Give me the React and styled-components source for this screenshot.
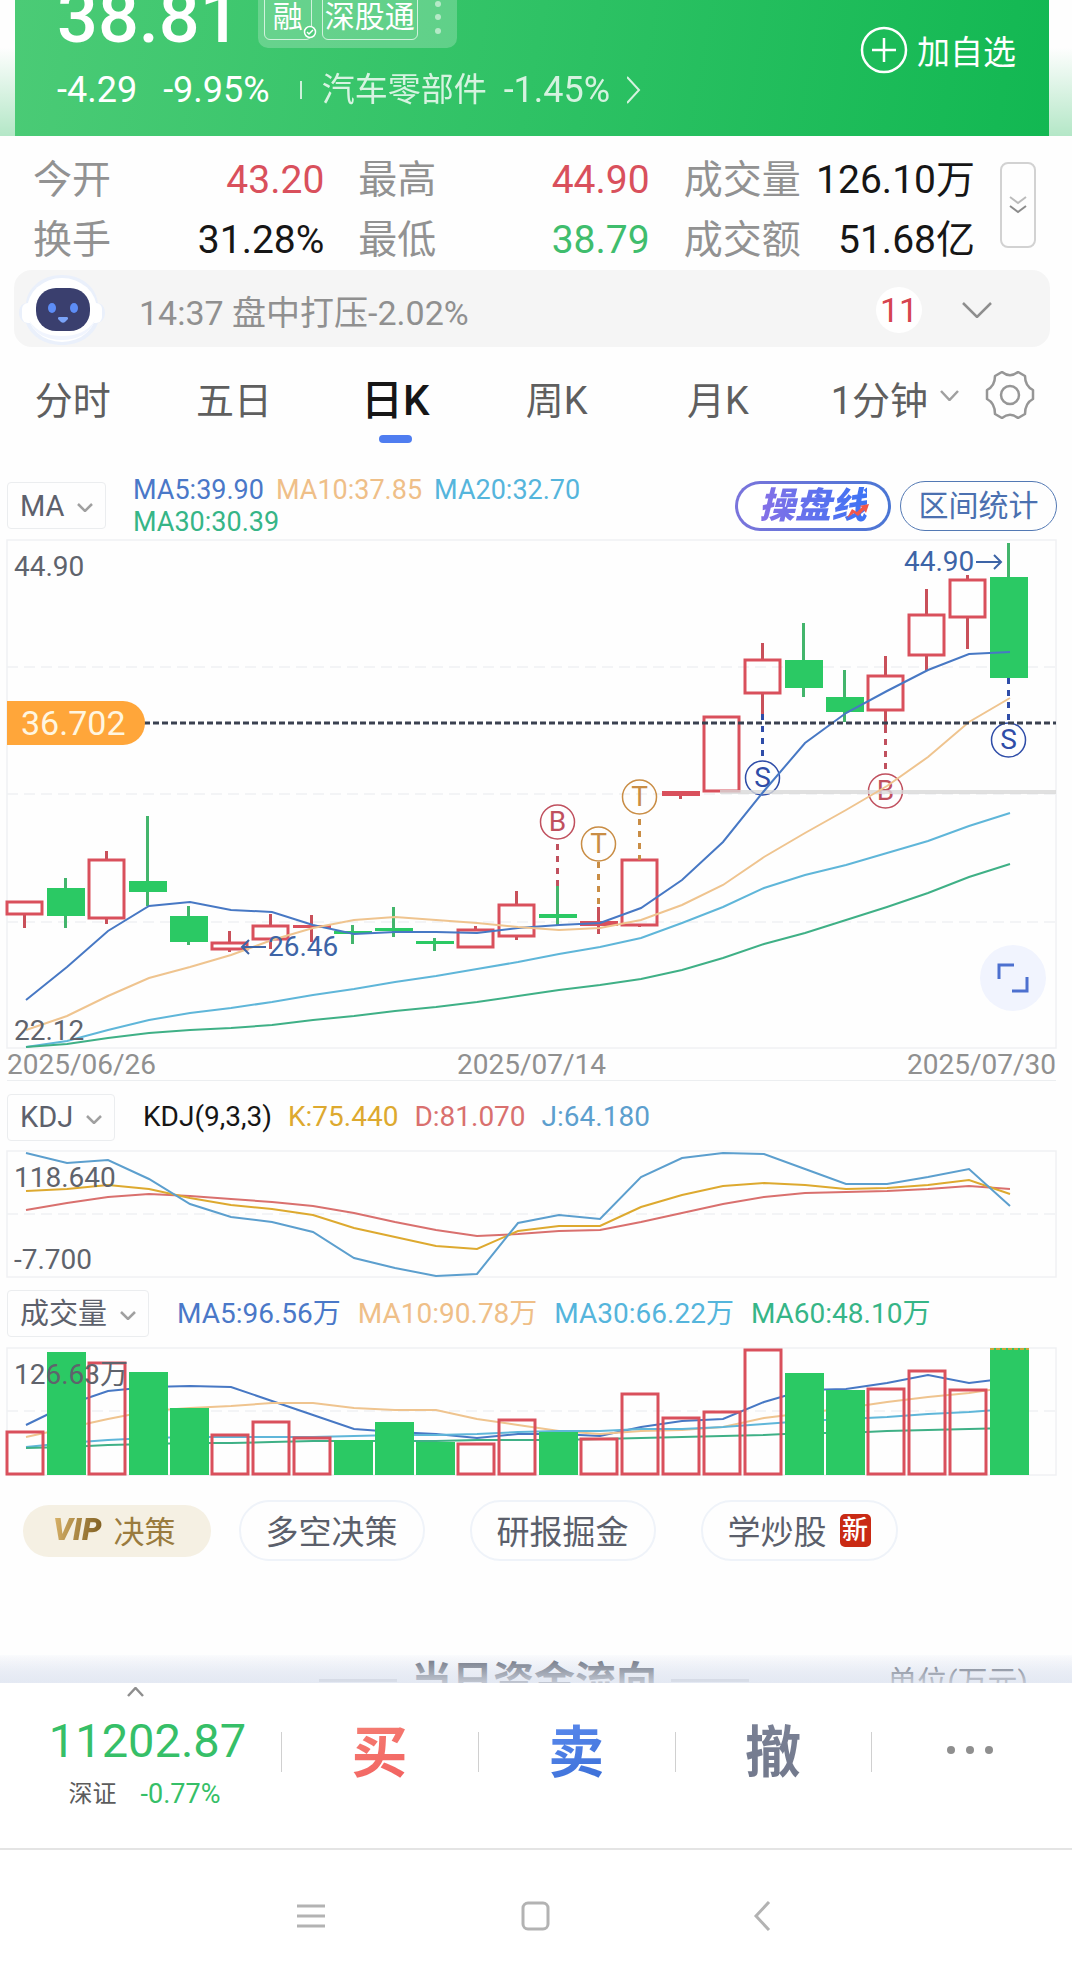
import React from 'react'
import styled, { createGlobalStyle } from 'styled-components'

const RED = '#d9505c'
const GREEN = '#2bc964'
const STEP = 41
const CHART_WIDTH = 1049

const GlobalStyle = createGlobalStyle`
* { box-sizing: border-box; }
body {
  margin: 0;
  background: #fefefe;
  font-family: Roboto, "Noto Sans CJK SC", sans-serif;
}
button, select {
  font-family: inherit;
  color: inherit;
  background: none;
  border: 0;
  padding: 0;
  margin: 0;
  cursor: pointer;
}
a { color: inherit; text-decoration: none; }
svg { display: block; flex: none; }
`

/* ---------- header ---------- */

const HeaderWrap = styled.header`
  padding: 0 23px 0 15px;
  background:
    linear-gradient(#fefefe 35%, rgba(254, 254, 254, 0)),
    #b4e7c7;
`

const Header = styled.div`
  display: flex;
  justify-content: space-between;
  height: 136px;
  padding: 0 33px 0 42px;
  color: #fff;
  background: linear-gradient(100deg, #4bcb76, #2fc265 50%, #12b852);
  overflow: hidden;
`

const PriceRow = styled.div`
  display: flex;
  align-items: flex-end;
  gap: 17px;
  height: 48px;
`

const Price = styled.strong`
  font-size: 72px;
  line-height: 60px;
  font-weight: 500;
`

const Tags = styled.div`
  display: flex;
  align-items: center;
  gap: 10px;
  height: 64px;
  padding: 8px 15px 8px 6px;
  border-radius: 10px;
  background: rgba(255, 255, 255, 0.22);
`

const Tag = styled.span`
  display: flex;
  align-items: flex-end;
  position: relative;
  height: 48px;
  padding: 0 ${props => (props.$wide ? '2px' : '8px')};
  border: 1px solid rgba(255, 255, 255, 0.7);
  border-radius: 6px;
  font-size: 30px;
  line-height: 44px;
`

const Check = styled.svg`
  position: absolute;
  right: -6px;
  bottom: 0;
`

const ChangeRow = styled.div`
  display: flex;
  align-items: center;
  padding-top: 22px;
  font-size: 36px;
  line-height: 40px;
`

const Change = styled.span`
  margin-right: 26px;
`

const Sector = styled.a`
  display: flex;
  align-items: center;
  gap: 17px;
  padding-left: 20px;
  opacity: 0.8;
`

const SectorName = styled.span`
  font-size: 33px;
`

const Bar = styled.i`
  width: 2px;
  height: 18px;
  margin-left: 4px;
  background: rgba(255, 255, 255, 0.75);
`

const AddButton = styled.button`
  display: flex;
  align-items: center;
  align-self: flex-start;
  gap: 9px;
  height: 54px;
  margin-top: 23px;
  font-size: 33px;
`

/* ---------- quote figures ---------- */

const Stats = styled.section`
  display: flex;
  gap: 25px;
  padding: 14px 36px 0 33px;
`

const StatGrid = styled.dl`
  flex: 1;
  display: grid;
  grid-template-columns: repeat(3, 1fr);
  column-gap: 34px;
  margin: 0;
  font-size: 39px;
  line-height: 60px;
`

const Stat = styled.div`
  display: flex;
  justify-content: space-between;
  white-space: nowrap;
`

const StatName = styled.dt`
  color: #929292;
`

const StatValue = styled.dd`
  margin: 0;
  color: ${props => props.$color || '#161616'};
`

const MoreButton = styled.button`
  display: flex;
  align-items: center;
  justify-content: center;
  width: 36px;
  height: 86px;
  margin-top: 12px;
  border: 2px solid #d2d2d2;
  border-radius: 8px;
`

/* ---------- alert ---------- */

const Alert = styled.section`
  display: flex;
  align-items: center;
  height: 77px;
  margin: 0 22px 0 14px;
  padding: 3px 58px 0 4px;
  border-radius: 18px;
  background: #f5f5f5;
  color: #909090;
  font-size: 34px;
`

const AlertText = styled.p`
  flex: 1;
  margin: 0 0 0 33px;
`

const Count = styled.span`
  display: flex;
  align-items: center;
  justify-content: center;
  width: 46px;
  height: 46px;
  margin-right: 40px;
  border-radius: 50%;
  background: #fff;
  color: #d64550;
`

/* ---------- period tabs ---------- */

const Tabs = styled.nav`
  display: flex;
  align-items: flex-start;
  height: 127px;
  margin-left: -8px;
  padding: 29px 37px 0 0;
`

const Tab = styled.button`
  flex: 1;
  display: flex;
  flex-direction: column;
  align-items: center;
  gap: 9px;
  color: ${props => (props.$active ? '#161616' : '#5f5f5f')};
  font-size: ${props => (props.$active ? '42px' : '38px')};
  font-weight: ${props => (props.$active ? 500 : 400)};
  line-height: 50px;
  white-space: nowrap;
  &::after {
    content: '';
    width: 33px;
    height: 8px;
    border-radius: 4px;
    background: ${props => (props.$active ? '#4f7df0' : 'transparent')};
  }
`

const PeriodChevron = styled.span`
  padding-top: 14px;
  margin-left: -20px;
`

const GearButton = styled.button`
  margin: -5px 0 0 26px;
`

/* ---------- indicator bars ---------- */

const IndicatorBar = styled.div`
  display: flex;
  align-items: center;
  gap: ${props => props.$gap || '28px'};
  height: ${props => props.$height};
  padding: ${props => props.$pad || '2px 16px 0 7px'};
`

const Picker = styled.label`
  position: relative;
  flex: none;
  display: flex;
  align-items: center;
  border: 1px solid #ebedef;
  border-radius: 4px;
  color: #5d616c;
  svg {
    position: absolute;
    right: 12px;
    top: 20px;
    pointer-events: none;
  }
`

const PickerSelect = styled.select`
  appearance: none;
  height: 45px;
  padding: 0 40px 0 12px;
  font-size: 29px;
  outline: none;
`

const Legend = styled.div`
  flex: 1;
  display: flex;
  flex-wrap: wrap;
  column-gap: ${props => props.$gap || '16px'};
  font-size: ${props => props.$size || '28px'};
  line-height: 32px;
`

const LegendItem = styled.span`
  color: ${props => props.$color};
  white-space: nowrap;
`

const BarButtons = styled.div`
  display: flex;
  gap: 9px;
`

const TradeLineButton = styled.button`
  position: relative;
  width: 156px;
  height: 50px;
  border: 3px solid transparent;
  border-radius: 25px;
  background:
    linear-gradient(#fff, #fff) padding-box,
    linear-gradient(90deg, #7a74dc, #4a76d4) border-box;
  span {
    font-size: 36px;
    line-height: 44px;
    font-weight: 900;
    font-style: italic;
    color: transparent;
    background: linear-gradient(90deg, #8670e6, #3c73f5);
    background-clip: text;
  }
  svg {
    position: absolute;
    right: 18px;
    bottom: 9px;
  }
`

const RangeButton = styled.button`
  width: 157px;
  height: 50px;
  border: 1px solid #5379b4;
  border-radius: 25px;
  color: #4b70b0;
  font-size: 30px;
  line-height: 44px;
`

/* ---------- charts ---------- */

const ChartBox = styled.div`
  position: relative;
  margin: 0 16px 0 7px;
`

const Plot = styled.svg`
  width: 100%;
  height: auto;
  overflow: visible;
  font-size: 28px;
`

const FullButton = styled.button`
  position: absolute;
  right: 10px;
  bottom: 37px;
  display: flex;
  align-items: center;
  justify-content: center;
  width: 66px;
  height: 66px;
  border-radius: 50%;
  background: #f1f4fe;
`

const Dates = styled.div`
  display: flex;
  justify-content: space-between;
  height: 33px;
  margin: 0 16px 0 7px;
  border-bottom: 1px solid #eceef0;
  color: #909090;
  font-size: 28px;
  line-height: 34px;
`

/* ---------- shortcuts ---------- */

const Shortcuts = styled.div`
  display: flex;
  align-items: center;
  gap: 45px;
  margin-top: 25px;
  padding-left: 23px;
`

const Shortcut = styled.a`
  display: flex;
  align-items: center;
  gap: 13px;
  height: 61px;
  padding: 0 25px 2px;
  border: 2px solid #eff3f9;
  border-radius: 31px;
  color: #5b5f6b;
  font-size: 33px;
  white-space: nowrap;
`

const VipShortcut = styled(Shortcut)`
  gap: 12px;
  height: 52px;
  margin-right: -17px;
  padding: 0 35px 2px 30px;
  border: 0;
  background: #f5f0e3;
  color: #9a7b3e;
  font-size: 31px;
  b {
    font-style: italic;
    font-weight: 900;
    color: transparent;
    background: linear-gradient(100deg, #dcb66c, #7a5a1e);
    background-clip: text;
  }
`

const NewMark = styled.em`
  width: 31px;
  margin-top: 2px;
  border-radius: 5px;
  background: #c92a14;
  color: #fff;
  font-size: 26px;
  font-style: normal;
  font-weight: 500;
  line-height: 33px;
  text-align: center;
`

/* ---------- next section, cut off by the footer ---------- */

const Peek = styled.section`
  position: relative;
  display: grid;
  grid-template-columns: 1fr auto 1fr;
  height: 28px;
  margin-top: 94px;
  padding-right: 4px;
  overflow: hidden;
  background: linear-gradient(#fdfdfe, #e4e9f3);
  color: #5b6270;
  white-space: nowrap;
  &::after {
    content: '';
    position: absolute;
    inset: 0;
    background: linear-gradient(rgba(228, 233, 243, 0.1), rgba(228, 233, 243, 0.75));
  }
`

const PeekTitle = styled.h2`
  grid-column: 2;
  display: flex;
  align-items: flex-start;
  gap: 14px;
  margin: 0;
  font-size: 41px;
  line-height: 54px;
  font-weight: 700;
  &::before, &::after {
    content: '';
    width: 78px;
    height: 3px;
    margin-top: 24px;
    background: #b9bfcc;
  }
`

const PeekUnit = styled.span`
  justify-self: end;
  padding-right: 40px;
  font-size: 30px;
  line-height: 54px;
`

/* ---------- footer ---------- */

const Footer = styled.footer`
  display: flex;
  height: 165px;
  padding-right: 4px;
  background: #fff;
`

const Index = styled.a`
  display: flex;
  flex-direction: column;
  align-items: center;
  width: 281px;
  padding: 4px 0 0 14px;
  color: #36bf68;
  svg { margin-right: 24px; }
`

const IndexValue = styled.strong`
  margin-top: 17px;
  font-size: 47px;
  font-weight: 400;
  line-height: 54px;
`

const IndexChange = styled.span`
  display: flex;
  gap: 24px;
  margin: 8px 6px 0 0;
  font-size: 27px;
  line-height: 36px;
  i {
    color: #5c5c5c;
    font-style: normal;
    font-size: 24px;
  }
`

const Action = styled.button`
  flex: 1;
  position: relative;
  display: flex;
  justify-content: center;
  padding-top: 30px;
  font-size: 56px;
  font-weight: 700;
  line-height: 80px;
  &::before {
    content: '';
    position: absolute;
    left: 0;
    top: 49px;
    width: 1px;
    height: 40px;
    background: #d0d0d0;
  }
  span {
    color: transparent;
    background: ${props => props.$fill};
    background-clip: text;
  }
  svg { margin-top: 32px; }
`

const SystemBar = styled.nav`
  display: flex;
  justify-content: center;
  align-items: center;
  gap: 191px;
  height: 130px;
  padding-top: 4px;
  border-top: 2px solid #e4e4e4;
  background: #fff;
`

/* ---------- data ---------- */

// [up, body top, body bottom, high, low]
const candles = [
  [1, 361, 375, 361, 388],
  [0, 348, 376, 338, 388],
  [1, 319, 379, 311, 384],
  [0, 341, 352, 276, 366],
  [0, 376, 402, 366, 405],
  [1, 402, 410, 391, 412],
  [1, 385, 400, 374, 409],
  [1, 385, 388, 375, 402],
  [0, 391, 394, 385, 404],
  [0, 388, 391, 367, 397],
  [0, 401, 404, 398, 411],
  [1, 389, 408, 386, 408],
  [1, 364, 397, 351, 400],
  [0, 374, 378, 346, 385],
  [1, 381, 386, 367, 394],
  [1, 319, 386, 319, 387],
  [1, 251, 256, 251, 259],
  [1, 176, 252, 176, 252],
  [1, 119, 154, 103, 174],
  [0, 120, 148, 83, 157],
  [0, 157, 172, 130, 182],
  [1, 135, 171, 116, 187],
  [1, 74, 116, 49, 131],
  [1, 39, 78, 35, 109],
  [0, 37, 138, 3, 138]
]

const priceLines = [
  ['#4778c4', [460, 427, 391, 366, 362, 370, 372, 385, 394, 392, 392, 393, 388, 385, 383, 368, 340, 302, 251, 203, 173, 151, 130, 114, 112]],
  ['#efc48f', [490, 476, 456, 438, 427, 415, 400, 388, 380, 377, 380, 383, 387, 390, 388, 380, 365, 345, 317, 293, 270, 246, 217, 182, 158]],
  ['#5fb6d9', [507, 501, 490, 480, 473, 468, 462, 455, 449, 442, 436, 429, 422, 414, 407, 398, 383, 367, 348, 335, 325, 313, 301, 286, 273]],
  ['#3fb086', [507, 504, 498, 493, 490, 488, 485, 480, 476, 471, 467, 462, 456, 450, 445, 439, 430, 418, 404, 393, 380, 367, 353, 337, 324]]
]

// [letter, candle index, circle centre, line from, line to, colour]
const signals = [
  ['B', 13, 282, 304, 346, '#c0505e'],
  ['T', 14, 304, 322, 367, '#c98d45'],
  ['T', 15, 257, 279, 320, '#c98d45'],
  ['S', 18, 238, 174, 220, '#2f4da8'],
  ['B', 21, 251, 187, 230, '#c0505e'],
  ['S', 24, 200, 138, 182, '#2f4da8']
]

const kdjLines = [
  ['#d9706e', [59, 52, 46, 43, 45, 48, 51, 55, 62, 71, 79, 85, 83, 80, 79, 71, 62, 53, 46, 42, 41, 40, 38, 35, 38]],
  ['#dda92f', [40, 38, 34, 38, 47, 54, 58, 64, 77, 86, 95, 98, 80, 75, 75, 56, 44, 35, 32, 34, 38, 37, 34, 29, 43]],
  ['#5c9fce', [2, 12, 9, 28, 53, 66, 71, 81, 107, 117, 125, 123, 72, 64, 68, 26, 7, 2, 3, 18, 33, 33, 26, 18, 55]]
]

// [up, bar top]
const volumes = [
  [1, 83], [0, 4], [1, 14], [0, 24], [0, 60], [1, 86], [1, 73], [1, 89], [0, 92],
  [0, 74], [0, 94], [1, 95], [1, 71], [0, 84], [1, 90], [1, 45], [1, 69], [1, 63],
  [1, 1], [0, 25], [0, 42], [1, 40], [1, 22], [1, 41], [0, 0]
]

const volumeLines = [
  ['#4778c4', [77, 57, 43, 39, 38, 39, 53, 67, 81, 84, 86, 90, 86, 86, 88, 79, 73, 71, 54, 42, 41, 35, 27, 35, 30]],
  ['#efc48f', [89, 80, 71, 63, 60, 58, 55, 55, 60, 62, 62, 71, 77, 83, 86, 83, 82, 79, 70, 65, 60, 54, 49, 45, 39]],
  ['#5fb6d9', [99, 95, 92, 90, 89, 89, 89, 89, 88, 87, 87, 86, 84, 83, 83, 81, 81, 79, 76, 73, 71, 69, 66, 64, 61]],
  ['#3fb086', [100, 99, 97, 96, 95, 95, 94, 93, 93, 93, 93, 92, 92, 92, 91, 90, 89, 88, 87, 85, 85, 83, 82, 81, 80]]
]

const stats = [
  ['今开', '43.20', '#d9505c'],
  ['最高', '44.90', '#d9505c'],
  ['成交量', '126.10万'],
  ['换手', '31.28%'],
  ['最低', '38.79', '#3fbd6d'],
  ['成交额', '51.68亿']
]

/* ---------- pieces ---------- */

function Chevron({ width = 16, height = 9, color = '#a0a0a0', up }) {
  const d = up
    ? `M1 ${height - 1} L${width / 2} 1 L${width - 1} ${height - 1}`
    : `M1 1 L${width / 2} ${height - 1} L${width - 1} 1`
  return (
    <svg width={width} height={height} fill="none" stroke={color} strokeWidth="2.5">
      <path d={d} />
    </svg>
  )
}

function Robot() {
  return (
    <svg width="88" height="72" viewBox="0 0 88 72">
      <path d="M44 1c21 0 34 13 36 28 5 1 7 5 7 10s-3 9-7 10c-5 13-18 22-36 22S13 62 8 49c-4-1-7-5-7-10s2-9 7-10C10 14 23 1 44 1z" fill="#eaf0fb" />
      <rect x="4" y="29" width="14" height="20" rx="6" fill="#fff" />
      <rect x="70" y="29" width="14" height="20" rx="6" fill="#fff" />
      <ellipse cx="44" cy="36" rx="35" ry="32" fill="#fff" />
      <path d="M11 46c5 14 18 20 33 20s28-6 33-20c-7 12-19 16-33 16s-26-4-33-16z" fill="#f1f5fe" />
      <rect x="18" y="14" width="54" height="43" rx="20" fill="#3a3f6e" />
      <ellipse cx="34" cy="34" rx="4" ry="5" fill="#5d8df6" />
      <ellipse cx="56" cy="34" rx="4" ry="5" fill="#5d8df6" />
      <path d="M41 43h8c1 0 1 1 1 2l-3 3c-1 1-3 1-4 0l-3-3c0-1 0-2 1-2z" fill="#7aa3f8" />
    </svg>
  )
}

function Gear() {
  return (
    <svg width="50" height="48" viewBox="0 0 50 48" fill="none" stroke="#969696" strokeWidth="2.5" strokeLinejoin="round">
      <path d="M17 1c5 4 11 4 16 0l7 4c0 7 2 11 8 14v9c-6 3-8 8-8 15l-7 4c-5-4-11-4-16 0l-7-4c0-7-2-12-8-15v-9c6-3 8-7 8-14z" />
      <circle cx="25" cy="24" r="9" />
    </svg>
  )
}

function IndicatorPicker({ name, label }) {
  return (
    <Picker>
      <PickerSelect aria-label={label} defaultValue={name}>
        <option value={name}>{name}</option>
      </PickerSelect>
      <Chevron />
    </Picker>
  )
}

function Frame({ height, grid }) {
  return (
    <g fill="none" stroke="#f0f1f3" strokeWidth="1.5">
      <rect x="0" y="0" width={CHART_WIDTH} height={height} />
      {grid.map(y => (
        <line key={y} x1="0" x2={CHART_WIDTH} y1={y} y2={y} strokeDasharray="11 6" />
      ))}
    </g>
  )
}

function Lines({ series }) {
  return series.map(([color, values]) => (
    <polyline
      key={color}
      fill="none"
      stroke={color}
      strokeWidth="2"
      points={values.map((y, i) => `${19 + i * STEP},${y}`).join(' ')}
    />
  ))
}

function Candle({ index, data }) {
  const [up, top, bottom, high, low] = data
  const x = 17.5 + index * STEP
  const color = up ? RED : GREEN
  const hollow = up && bottom - top > 6
  return (
    <g>
      <path d={`M${x} ${high}V${top}M${x} ${bottom}V${low}`} stroke={up ? '#c9505a' : '#43b56c'} strokeWidth="3" />
      {hollow
        ? <rect x={x - 17.5} y={top + 1} width="35" height={bottom - top - 2} fill="none" stroke={color} strokeWidth="3" />
        : <rect x={x - 18.5} y={top} width="38" height={bottom - top} fill={color} />}
    </g>
  )
}

function Signal({ letter, index, cy, from, to, color }) {
  const x = 17.5 + index * STEP
  return (
    <g>
      <line x1={x} x2={x} y1={from} y2={to} stroke={color} strokeWidth="3" strokeDasharray="6 6" />
      <circle cx={x} cy={cy} r="17" fill="none" stroke={color} strokeWidth="1.5" />
      <text x={x} y={cy + 9} textAnchor="middle" fill={color}>{letter}</text>
    </g>
  )
}

function PriceChart() {
  return (
    <ChartBox>
      <Plot viewBox={`0 0 ${CHART_WIDTH} 508`}>
        <Frame height={508} grid={[127, 254, 382]} />
        {candles.map((data, i) => <Candle key={i} index={i} data={data} />)}
        {signals.map(([letter, index, cy, from, to, color]) => (
          <Signal key={index} letter={letter} index={index} cy={cy} from={from} to={to} color={color} />
        ))}
        <line x1="713" x2={CHART_WIDTH} y1="252" y2="252" stroke="#d8d8d8" strokeOpacity="0.8" strokeWidth="4" />
        <Lines series={priceLines} />
        <line x1="137" x2={CHART_WIDTH} y1="183" y2="183" stroke="#3a4150" strokeWidth="3" strokeDasharray="6 3" />
        <path d="M0 161h116a22 22 0 0 1 0 44h-116z" fill="#ffa63a" />
        <text x="14" y="195" fill="#fff6e0" fontSize="34">36.702</text>
        <g fill="#5f636c">
          <text x="7" y="36">44.90</text>
          <text x="7" y="500">22.12</text>
        </g>
        <g fill="#3d64a6">
          <text x="897" y="31">44.90</text>
          <text x="261" y="416">26.46</text>
        </g>
        <g fill="none" stroke="#3d64a6" strokeWidth="2">
          <path d="M969 22h25M987 15l7 7l-7 7" />
          <path d="M259 407h-24M242 400l-7 7l7 7" />
        </g>
      </Plot>
      <FullButton aria-label="全屏">
        <svg width="32" height="30" fill="none" stroke="#4d70cf" strokeWidth="3">
          <path d="M2 16V2H17M30 14V28H15" />
        </svg>
      </FullButton>
    </ChartBox>
  )
}

function KdjChart() {
  return (
    <ChartBox>
      <Plot viewBox={`0 0 ${CHART_WIDTH} 126`}>
        <Frame height={126} grid={[63]} />
        <Lines series={kdjLines} />
        <g fill="#5f636c">
          <text x="7" y="36">118.640</text>
          <text x="7" y="118">-7.700</text>
        </g>
      </Plot>
    </ChartBox>
  )
}

function VolumeChart() {
  return (
    <ChartBox>
      <Plot viewBox={`0 0 ${CHART_WIDTH} 127`}>
        <Frame height={127} grid={[63]} />
        <Lines series={volumeLines} />
        {volumes.map(([up, top], i) => up
          ? <rect key={i} x={i * STEP} y={top + 1} width="36" height={125 - top} fill="none" stroke={RED} strokeWidth="3" />
          : <rect key={i} x={i * STEP - 1} y={top} width="39" height={127 - top} fill={GREEN} />
        )}
        <line x1="983" x2="1022" y1="1" y2="1" stroke="#c8a83a" strokeWidth="2" strokeDasharray="4 2" />
        <text x="7" y="36" fill="#5f636c">126.63万</text>
      </Plot>
    </ChartBox>
  )
}

function QuoteHeader() {
  return (
    <HeaderWrap>
      <Header>
        <div>
          <PriceRow>
            <Price>38.81</Price>
            <Tags>
              <Tag>
                融
                <Check width="14" height="14" viewBox="0 0 14 14" fill="#4fcb7b" stroke="#fff" strokeWidth="1.5">
                  <circle cx="7" cy="7" r="5.5" />
                  <path d="M4 7l2 2l4-4" />
                </Check>
              </Tag>
              <Tag $wide>深股通</Tag>
              <svg width="14" height="48" fill="#b5e9c7">
                <circle cx="10" cy="12" r="3" />
                <circle cx="10" cy="25" r="3" />
                <circle cx="10" cy="39" r="3" />
              </svg>
            </Tags>
          </PriceRow>
          <ChangeRow>
            <Change>-4.29</Change>
            <Change>-9.95%</Change>
            <Bar />
            <Sector href="#sector">
              <SectorName>汽车零部件</SectorName>
              <span>-1.45%</span>
              <svg width="16" height="28" fill="none" stroke="#fff" strokeWidth="2">
                <path d="M0 1L12 14L0 27" />
              </svg>
            </Sector>
          </ChangeRow>
        </div>
        <AddButton>
          <svg width="48" height="48" fill="none" stroke="#fff" strokeWidth="2.5">
            <circle cx="24" cy="24" r="22" />
            <path d="M12 24H36M24 12V36" />
          </svg>
          加自选
        </AddButton>
      </Header>
    </HeaderWrap>
  )
}

function App() {
  return (
    <>
      <GlobalStyle />
      <QuoteHeader />

      <Stats>
        <StatGrid>
          {stats.map(([name, value, color]) => (
            <Stat key={name}>
              <StatName>{name}</StatName>
              <StatValue $color={color}>{value}</StatValue>
            </Stat>
          ))}
        </StatGrid>
        <MoreButton aria-label="展开">
          <svg width="18" height="18" fill="none" strokeWidth="2">
            <path d="M1 1L9 7L17 1" stroke="#bbb" />
            <path d="M1 10L9 16L17 10" stroke="#8c8c8c" />
          </svg>
        </MoreButton>
      </Stats>

      <Alert>
        <Robot />
        <AlertText>14:37 盘中打压-2.02%</AlertText>
        <Count>11</Count>
        <Chevron width={30} height={16} color="#8e8e8e" />
      </Alert>

      <Tabs>
        <Tab>分时</Tab>
        <Tab>五日</Tab>
        <Tab $active>日K</Tab>
        <Tab>周K</Tab>
        <Tab>月K</Tab>
        <Tab>1分钟</Tab>
        <PeriodChevron><Chevron width={19} height={11} /></PeriodChevron>
        <GearButton aria-label="设置"><Gear /></GearButton>
      </Tabs>

      <IndicatorBar $height="66px" $gap="27px" $pad="0 15px 3px 7px">
        <IndicatorPicker name="MA" label="主图指标" />
        <Legend $size="27px" $gap="12px">
          <LegendItem $color="#4a78c8">MA5:39.90</LegendItem>
          <LegendItem $color="#efbf88">MA10:37.85</LegendItem>
          <LegendItem $color="#55b5dc">MA20:32.70</LegendItem>
          <LegendItem $color="#36b587">MA30:30.39</LegendItem>
        </Legend>
        <BarButtons>
          <TradeLineButton>
            <span>操盘线</span>
            <svg width="24" height="16" viewBox="0 0 24 16" fill="#f2574a">
              <path d="M1 15L6 6L11 9L16 4L13 3L23 1L20 10L18 7L12 13L8 10z" />
            </svg>
          </TradeLineButton>
          <RangeButton>区间统计</RangeButton>
        </BarButtons>
      </IndicatorBar>
      <PriceChart />
      <Dates>
        <span>2025/06/26</span>
        <span>2025/07/14</span>
        <span>2025/07/30</span>
      </Dates>

      <IndicatorBar $height="70px">
        <IndicatorPicker name="KDJ" label="副图指标一" />
        <Legend>
          <LegendItem $color="#161616">KDJ(9,3,3)</LegendItem>
          <LegendItem $color="#dda92f">K:75.440</LegendItem>
          <LegendItem $color="#d9706e">D:81.070</LegendItem>
          <LegendItem $color="#5c9fce">J:64.180</LegendItem>
        </Legend>
      </IndicatorBar>
      <KdjChart />

      <IndicatorBar $height="71px">
        <IndicatorPicker name="成交量" label="副图指标二" />
        <Legend $gap="17px">
          <LegendItem $color="#4a78c8">MA5:96.56万</LegendItem>
          <LegendItem $color="#efbf88">MA10:90.78万</LegendItem>
          <LegendItem $color="#55b5dc">MA30:66.22万</LegendItem>
          <LegendItem $color="#36b587">MA60:48.10万</LegendItem>
        </Legend>
      </IndicatorBar>
      <VolumeChart />

      <Shortcuts>
        <VipShortcut href="#vip"><b>VIP</b>决策</VipShortcut>
        <Shortcut href="#long-short">多空决策</Shortcut>
        <Shortcut href="#reports">研报掘金</Shortcut>
        <Shortcut href="#learn">学炒股<NewMark>新</NewMark></Shortcut>
      </Shortcuts>

      <Peek>
        <PeekTitle>当日资金流向</PeekTitle>
        <PeekUnit>单位(万元)</PeekUnit>
      </Peek>

      <Footer>
        <Index href="#index">
          <Chevron width={17} height={10} color="#8e8e8e" up />
          <IndexValue>11202.87</IndexValue>
          <IndexChange><i>深证</i>-0.77%</IndexChange>
        </Index>
        <Action $fill="linear-gradient(160deg, #f58377, #f0474d)"><span>买</span></Action>
        <Action $fill="linear-gradient(160deg, #5f8df0, #1f58c4)"><span>卖</span></Action>
        <Action $fill="linear-gradient(#7b8296, #6a7083)"><span>撤</span></Action>
        <Action aria-label="更多">
          <svg width="50" height="10" fill="#8f8f8f">
            <circle cx="6" cy="5" r="4" />
            <circle cx="25" cy="5" r="4" />
            <circle cx="44" cy="5" r="4" />
          </svg>
        </Action>
      </Footer>

      <SystemBar>
        <button aria-label="任务">
          <svg width="28" height="24" stroke="#b3b3b3" strokeWidth="3">
            <path d="M0 2H28M0 12H28M0 22H28" />
          </svg>
        </button>
        <button aria-label="主页">
          <svg width="40" height="30" fill="none" stroke="#b3b3b3" strokeWidth="3">
            <rect x="7" y="2" width="25" height="26" rx="5" />
          </svg>
        </button>
        <button aria-label="返回">
          <svg width="28" height="30" fill="none" stroke="#b3b3b3" strokeWidth="3">
            <path d="M22 1L9 15L22 29" />
          </svg>
        </button>
      </SystemBar>
    </>
  )
}

export default App
